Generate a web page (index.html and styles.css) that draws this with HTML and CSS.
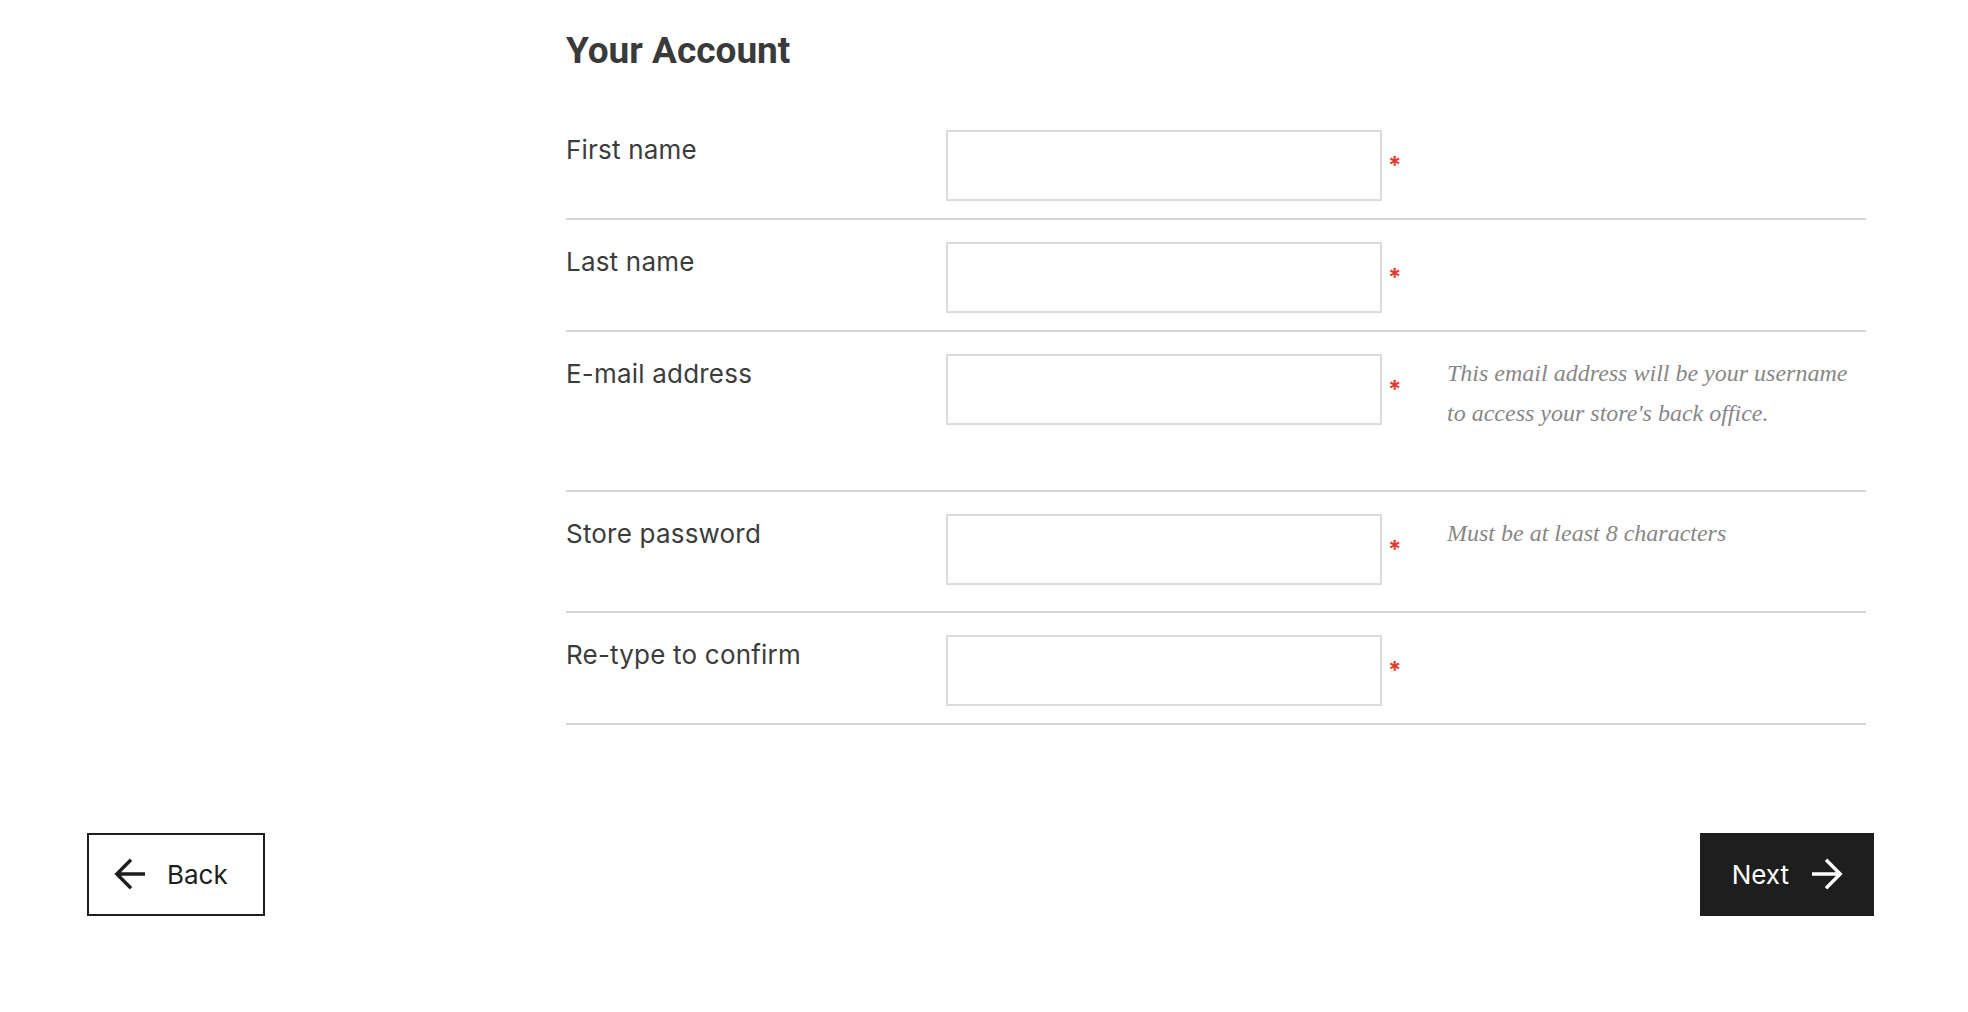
FILE: index.html
```html
<!DOCTYPE html>
<html lang="en">
<head>
<meta charset="utf-8">
<title>Your Account</title>
<link rel="stylesheet" href="styles.css">
</head>
<body>
<main class="page">
  <section class="form">
    <h1 class="title">Your Account</h1>

    <div class="row">
      <label class="label" for="first">First name</label>
      <input class="field" id="first" type="text">
      <span class="req">*</span>
    </div>

    <div class="row">
      <label class="label" for="last">Last name</label>
      <input class="field" id="last" type="text">
      <span class="req">*</span>
    </div>

    <div class="row">
      <label class="label" for="email">E-mail address</label>
      <input class="field" id="email" type="email">
      <span class="req">*</span>
      <p class="hint">This email address will be your username to access your store's back office.</p>
    </div>

    <div class="row">
      <label class="label" for="pass">Store password</label>
      <input class="field" id="pass" type="password">
      <span class="req">*</span>
      <p class="hint">Must be at least 8 characters</p>
    </div>

    <div class="row">
      <label class="label" for="confirm">Re-type to confirm</label>
      <input class="field" id="confirm" type="password">
      <span class="req">*</span>
    </div>
  </section>

  <footer class="actions">
    <button class="btn btn-back" type="button">
      <svg class="btn-icon" viewBox="0 0 32 32" width="32" height="32" aria-hidden="true">
        <path d="M31 16H3 M17 1.8 L2.8 16 L17 30.2" fill="none" stroke="currentColor" stroke-width="3.4"/>
      </svg>
      <span>Back</span>
    </button>
    <button class="btn btn-next" type="button">
      <span>Next</span>
      <svg class="btn-icon" viewBox="0 0 32 32" width="32" height="32" aria-hidden="true">
        <path d="M1 16H29 M15 1.8 L29.2 16 L15 30.2" fill="none" stroke="currentColor" stroke-width="3.4"/>
      </svg>
    </button>
  </footer>
</main>
</body>
</html>
```

FILE: styles.css
```css
html, body {
  margin: 0;
  padding: 0;
  background: #ffffff;
}

body {
  font-family: "Inter", "Liberation Sans", sans-serif;
  color: #3c3c3c;
}

.page {
  width: 1968px;
  padding-top: 33px;
}

.form {
  width: 1300px;
  margin-left: 566px;
}

.title {
  margin: 0 0 39px;
  font-family: "Roboto", "Inter", sans-serif;
  font-weight: 700;
  font-size: 37px;
  line-height: 36px;
  color: #3a3a3a;
}

.row {
  display: grid;
  grid-template-columns: 380px 436px 65px 1fr;
  align-items: start;
  padding: 22px 0 17px;
  border-bottom: 2px solid #d4d4d4;
}

.label {
  font-size: 26px;
  line-height: 39px;
  font-weight: 400;
  letter-spacing: 0.2px;
  color: #3c3c3c;
}

.field {
  display: block;
  box-sizing: border-box;
  width: 436px;
  height: 71px;
  margin: 0;
  padding: 0 14px;
  border: 2px solid #dcdcdc;
  border-radius: 0;
  background: #ffffff;
  font: inherit;
  font-size: 22px;
  outline: none;
}

.req {
  padding-top: 25px;
  padding-left: 6px;
  font-family: "Inter", sans-serif;
  font-size: 24px;
  line-height: 22px;
  font-weight: 700;
  color: #e63a2b;
}

.hint {
  margin: 0 0 40px;
  font-family: "Liberation Serif", serif;
  font-style: italic;
  font-size: 24px;
  line-height: 39.5px;
  color: #878787;
}

.actions {
  display: flex;
  justify-content: space-between;
  align-items: center;
  margin-top: 108px;
  padding: 0 94px 0 87px;
}

.btn {
  display: inline-flex;
  align-items: center;
  box-sizing: border-box;
  height: 83px;
  margin: 0;
  font-family: "Inter", "Liberation Sans", sans-serif;
  font-size: 26px;
  font-weight: 400;
  cursor: pointer;
}

.btn-back {
  gap: 21px;
  padding: 0 35px 0 25px;
  border: 2px solid #1e1e1e;
  background: #ffffff;
  color: #1e1e1e;
}

.btn-next {
  gap: 22px;
  padding: 0 29px 0 30px;
  border: 2px solid #1e1e1e;
  background: #1e1e1e;
  color: #ffffff;
}

.btn-icon {
  display: block;
  flex: none;
}
```
